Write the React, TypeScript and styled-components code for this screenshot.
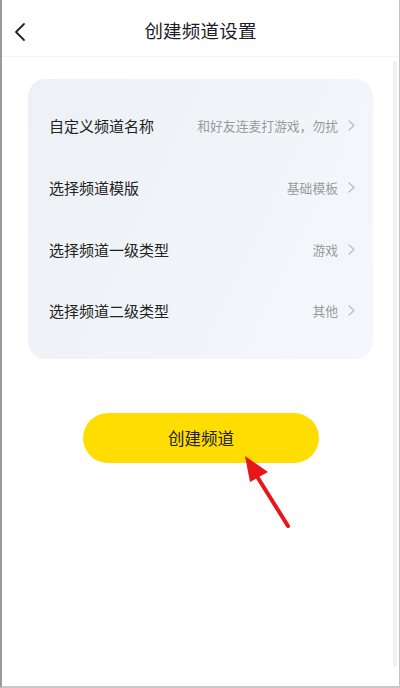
import styled, { createGlobalStyle } from "styled-components";

const GlobalStyle = createGlobalStyle`
  html, body {
    margin: 0;
    padding: 0;
    background: #ffffff;
  }
  * {
    box-sizing: border-box;
  }
`;

const rows = [
  { label: "自定义频道名称", value: "和好友连麦打游戏，勿扰" },
  { label: "选择频道模版", value: "基础模板" },
  { label: "选择频道一级类型", value: "游戏" },
  { label: "选择频道二级类型", value: "其他" },
];

const App = () => {
  return (
    <Frame>
      <GlobalStyle />
      <Header>
        <Back>
          <svg width="12" height="20" viewBox="0 0 12 20">
            <path
              d="M10 2 L2 10 L10 18"
              fill="none"
              stroke="#222"
              strokeWidth="1.8"
              strokeLinecap="round"
              strokeLinejoin="round"
            />
          </svg>
        </Back>
        <Title>创建频道设置</Title>
      </Header>
      <Body>
        <Card>
          {rows.map((r) => (
            <Row key={r.label}>
              <Label>{r.label}</Label>
              <Value>
                {r.value}
                <svg width="7" height="11" viewBox="0 0 7 11">
                  <path
                    d="M1 1 L6 5.5 L1 10"
                    fill="none"
                    stroke="#b8bcc2"
                    strokeWidth="1.2"
                    strokeLinecap="round"
                    strokeLinejoin="round"
                  />
                </svg>
              </Value>
            </Row>
          ))}
        </Card>
        <ButtonWrap>
          <Button type="button">创建频道</Button>
          {/* red annotation arrow pointing at the button */}
          <Arrow width="70" height="90" viewBox="0 0 70 90">
            <path d="M46 74 L16 26" stroke="#e8151b" strokeWidth="4" strokeLinecap="round" />
            <polygon points="3,4 8,30 26,20" fill="#e8151b" />
          </Arrow>
        </ButtonWrap>
        <ScrollBar />
      </Body>
    </Frame>
  );
};

export default App;

const Frame = styled.div`
  width: 400px;
  height: 688px;
  display: flex;
  flex-direction: column;
  border-left: 2px solid #9a9a9a;
  border-right: 1px solid #c4c4c4;
  border-bottom: 2px solid #c8c8c8;
  background: #ffffff;
  font-family: "Noto Sans CJK SC", "Noto Sans", sans-serif;
  overflow: hidden;
`;

const Header = styled.div`
  height: 57px;
  flex-shrink: 0;
  display: flex;
  align-items: center;
  justify-content: center;
  position: relative;
  border-bottom: 1px solid #f2f2f2;
`;

const Back = styled.div`
  position: absolute;
  left: 12px;
  top: 22px;
  display: flex;
`;

const Title = styled.div`
  font-size: 18.5px;
  color: #1c1c28;
  letter-spacing: 0.2px;
  margin-top: 4px;
`;

const Body = styled.div`
  flex: 1;
  position: relative;
  padding: 22px 25px 0 26px;
  display: flex;
  flex-direction: column;
`;

const ScrollBar = styled.div`
  position: absolute;
  right: 2px;
  top: 4px;
  width: 4px;
  height: 606px;
  background: #f1f1f1;
`;

const Card = styled.div`
  width: 345px;
  padding: 16px 18px 17px 21px;
  border-radius: 18px;
  background: linear-gradient(115deg, #edf0f4 0%, #f1f4f8 55%, #f4f8fc 100%);
`;

const Row = styled.div`
  height: 61.7px;
  display: flex;
  align-items: center;
  justify-content: space-between;
`;

const Label = styled.div`
  font-size: 15px;
  color: #222;
`;

const Value = styled.div`
  display: flex;
  align-items: center;
  gap: 10px;
  font-size: 12.8px;
  color: #9a9a9a;
`;

const ButtonWrap = styled.div`
  position: relative;
  margin-top: 54px;
  display: flex;
  justify-content: center;
  padding-right: 2px;
`;

const Button = styled.button`
  width: 236px;
  height: 50px;
  border: none;
  border-radius: 25px;
  background: #ffdd00;
  color: #222;
  font-family: "Noto Sans CJK SC", "Noto Sans", sans-serif;
  font-size: 16.5px;
  padding: 0;
  margin-left: 2px;
`;

const Arrow = styled.svg`
  position: absolute;
  left: 214px;
  top: 39px;
`;
